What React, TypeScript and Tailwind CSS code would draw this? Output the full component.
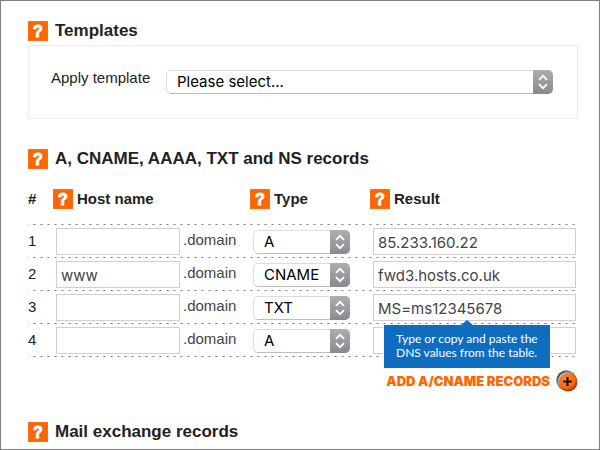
import type { ReactNode } from "react";

const dotted =
  "bg-[linear-gradient(90deg,#77779a_2px,transparent_2px)] bg-[length:7px_1px] bg-repeat-x bg-bottom";

type RecordRow = { id: number; host: string; type: string; result: string; tip?: boolean };

const rows: RecordRow[] = [
  { id: 1, host: "", type: "A", result: "85.233.160.22" },
  { id: 2, host: "www", type: "CNAME", result: "fwd3.hosts.co.uk" },
  { id: 3, host: "", type: "TXT", result: "MS=ms12345678", tip: true },
  { id: 4, host: "", type: "A", result: "" },
];

function Help({ topic }: { topic: string }) {
  return (
    <button
      type="button"
      aria-label={`Help: ${topic}`}
      className="flex size-5 shrink-0 items-center justify-center border border-[#f5701a] bg-[#ff6600] pt-px text-base leading-4 font-bold text-white [-webkit-text-stroke:1px_white] [text-shadow:1px_1px_1px_#c4682c]"
    >
      ?
    </button>
  );
}

function SectionTitle({ children }: { children: string }) {
  return (
    <div className="flex items-center gap-[7px]">
      <Help topic={children} />
      <h2 className="text-[17px] leading-5 font-bold text-[#222]">{children}</h2>
    </div>
  );
}

function ColumnTitle({ children }: { children: string }) {
  return (
    <div className="flex items-center gap-1">
      <Help topic={children} />
      <span className="text-[15px] leading-5">{children}</span>
    </div>
  );
}

function Select({
  id,
  label,
  value,
  options,
}: {
  id: string;
  label?: string;
  value: string;
  options: string[];
}) {
  return (
    <div className="relative">
      <select
        id={id}
        aria-label={label}
        defaultValue={value}
        className="block h-6 w-full appearance-none rounded-[5px] border border-[#dcdcdc] border-b-[#bdbdbd] bg-white pr-6 pl-[10px] font-['Inter',sans-serif] text-[15px] leading-5 text-black"
      >
        {options.map((option) => (
          <option key={option}>{option}</option>
        ))}
      </select>
      <span className="pointer-events-none absolute inset-y-0 right-0 flex w-5 items-center justify-center rounded-r-[5px] bg-linear-to-b from-[#aeaeb2] to-[#89898e]">
        <svg width="10" height="16" viewBox="0 0 10 16" fill="none" stroke="#fff" strokeWidth="1.8">
          <path d="M1 5.8l4-4 4 4M1 10.2l4 4 4-4" />
        </svg>
      </span>
    </div>
  );
}

function Field({ label, value }: { label: string; value: string }) {
  return (
    <input
      type="text"
      aria-label={label}
      defaultValue={value}
      className="block h-[27px] w-full border border-[#cfcfcf] bg-white px-1 pt-px font-['Inter',sans-serif] text-[15px] text-[#444]"
    />
  );
}

function Tooltip({ children }: { children: ReactNode }) {
  return (
    <div
      role="tooltip"
      className="absolute top-[31px] left-[11px] z-10 w-[166px] bg-[#0f6dbf] pt-[7px] pb-2 pl-3 font-['Lato',sans-serif] text-[12px] leading-[14px] whitespace-nowrap text-white shadow-[0_0_0_1px_white]"
    >
      <span className="absolute -top-[5px] left-[77px] border-x-6 border-b-5 border-x-transparent border-b-[#0f6dbf]" />
      {children}
    </div>
  );
}

function PlusBadge() {
  return (
    <svg width="22" height="22" viewBox="0 0 22 22" aria-hidden="true">
      <defs>
        <linearGradient id="ring" x1="0" y1="0" x2="1" y2="1">
          <stop offset="0" stopColor="#222" />
          <stop offset="0.4" stopColor="#888" />
          <stop offset="0.65" stopColor="#b84a08" />
          <stop offset="1" stopColor="#3a1500" />
        </linearGradient>
        <radialGradient id="ball" cx="0.4" cy="0.35" r="0.7">
          <stop offset="0" stopColor="#ff8d3d" />
          <stop offset="0.65" stopColor="#f8660c" />
          <stop offset="1" stopColor="#7a2c00" />
        </radialGradient>
      </defs>
      <circle cx="10.5" cy="10.5" r="10.2" fill="url(#ring)" />
      <circle cx="11" cy="11" r="8.8" fill="#c9c4c0" />
      <circle cx="12.2" cy="12.2" r="9.2" fill="url(#ball)" />
      <path d="M11.5 7v9M7 11.5h9" stroke="#1c0c02" strokeWidth="2.2" />
    </svg>
  );
}

export default function App() {
  return (
    <main className="min-h-screen border border-[#808080] bg-white pt-5 pr-[21px] pl-[27px] font-['Liberation_Sans',Arial,sans-serif] text-[#222]">
      <section>
        <SectionTitle>Templates</SectionTitle>
        <div className="mt-1 flex items-start border border-[#ececec] pt-6 pr-6 pb-6 pl-[22px]">
          <label htmlFor="template" className="w-[115px] shrink-0 text-[15px] leading-4">
            Apply template
          </label>
          <div className="grow">
            <Select id="template" value="Please select..." options={["Please select..."]} />
          </div>
        </div>
      </section>

      <section className="mt-[30px]">
        <SectionTitle>A, CNAME, AAAA, TXT and NS records</SectionTitle>
        <table className="mt-4 w-full table-fixed border-collapse text-left text-[15px]">
          <thead>
            <tr className={`h-10 ${dotted}`}>
              <th className="w-[25px] p-0 pt-1 pb-4 leading-5">#</th>
              <th className="w-[197px] p-0 pt-1 pb-4">
                <ColumnTitle>Host name</ColumnTitle>
              </th>
              <th className="w-30 p-0 pt-1 pb-4">
                <ColumnTitle>Type</ColumnTitle>
              </th>
              <th className="p-0 pt-1 pb-4">
                <ColumnTitle>Result</ColumnTitle>
              </th>
            </tr>
          </thead>
          <tbody>
            {rows.map((row) => (
              <tr key={row.id} className={dotted}>
                <td className="p-0">{row.id}</td>
                <td className="p-0 pl-[3px]">
                  <div className="flex items-start gap-[3px]">
                    <div className="w-[124px]">
                      <Field label={`Host name ${row.id}`} value={row.host} />
                    </div>
                    <span className="pt-0.5 leading-5 text-[#444]">.domain</span>
                  </div>
                </td>
                <td className="p-0 pr-5 pl-[3px]">
                  <Select
                    id={`type-${row.id}`}
                    label={`Type ${row.id}`}
                    value={row.type}
                    options={["A", "CNAME", "AAAA", "TXT", "NS"]}
                  />
                </td>
                <td className="py-[3px] pr-[2px] pl-[3px]">
                  <div className="relative">
                    <Field label={`Result ${row.id}`} value={row.result} />
                    {row.tip && (
                      <Tooltip>
                        Type or copy and paste the
                        <br />
                        DNS values from the table.
                      </Tooltip>
                    )}
                  </div>
                </td>
              </tr>
            ))}
          </tbody>
        </table>
        <div className="mt-[13px] flex justify-end">
          <button
            type="button"
            className="flex items-center gap-[6px] font-['Inter',sans-serif] text-[13px] leading-none font-black text-[#ff6600]"
          >
            ADD A/CNAME RECORDS
            <PlusBadge />
          </button>
        </div>
      </section>

      <section className="mt-[30px]">
        <SectionTitle>Mail exchange records</SectionTitle>
      </section>
    </main>
  );
}
